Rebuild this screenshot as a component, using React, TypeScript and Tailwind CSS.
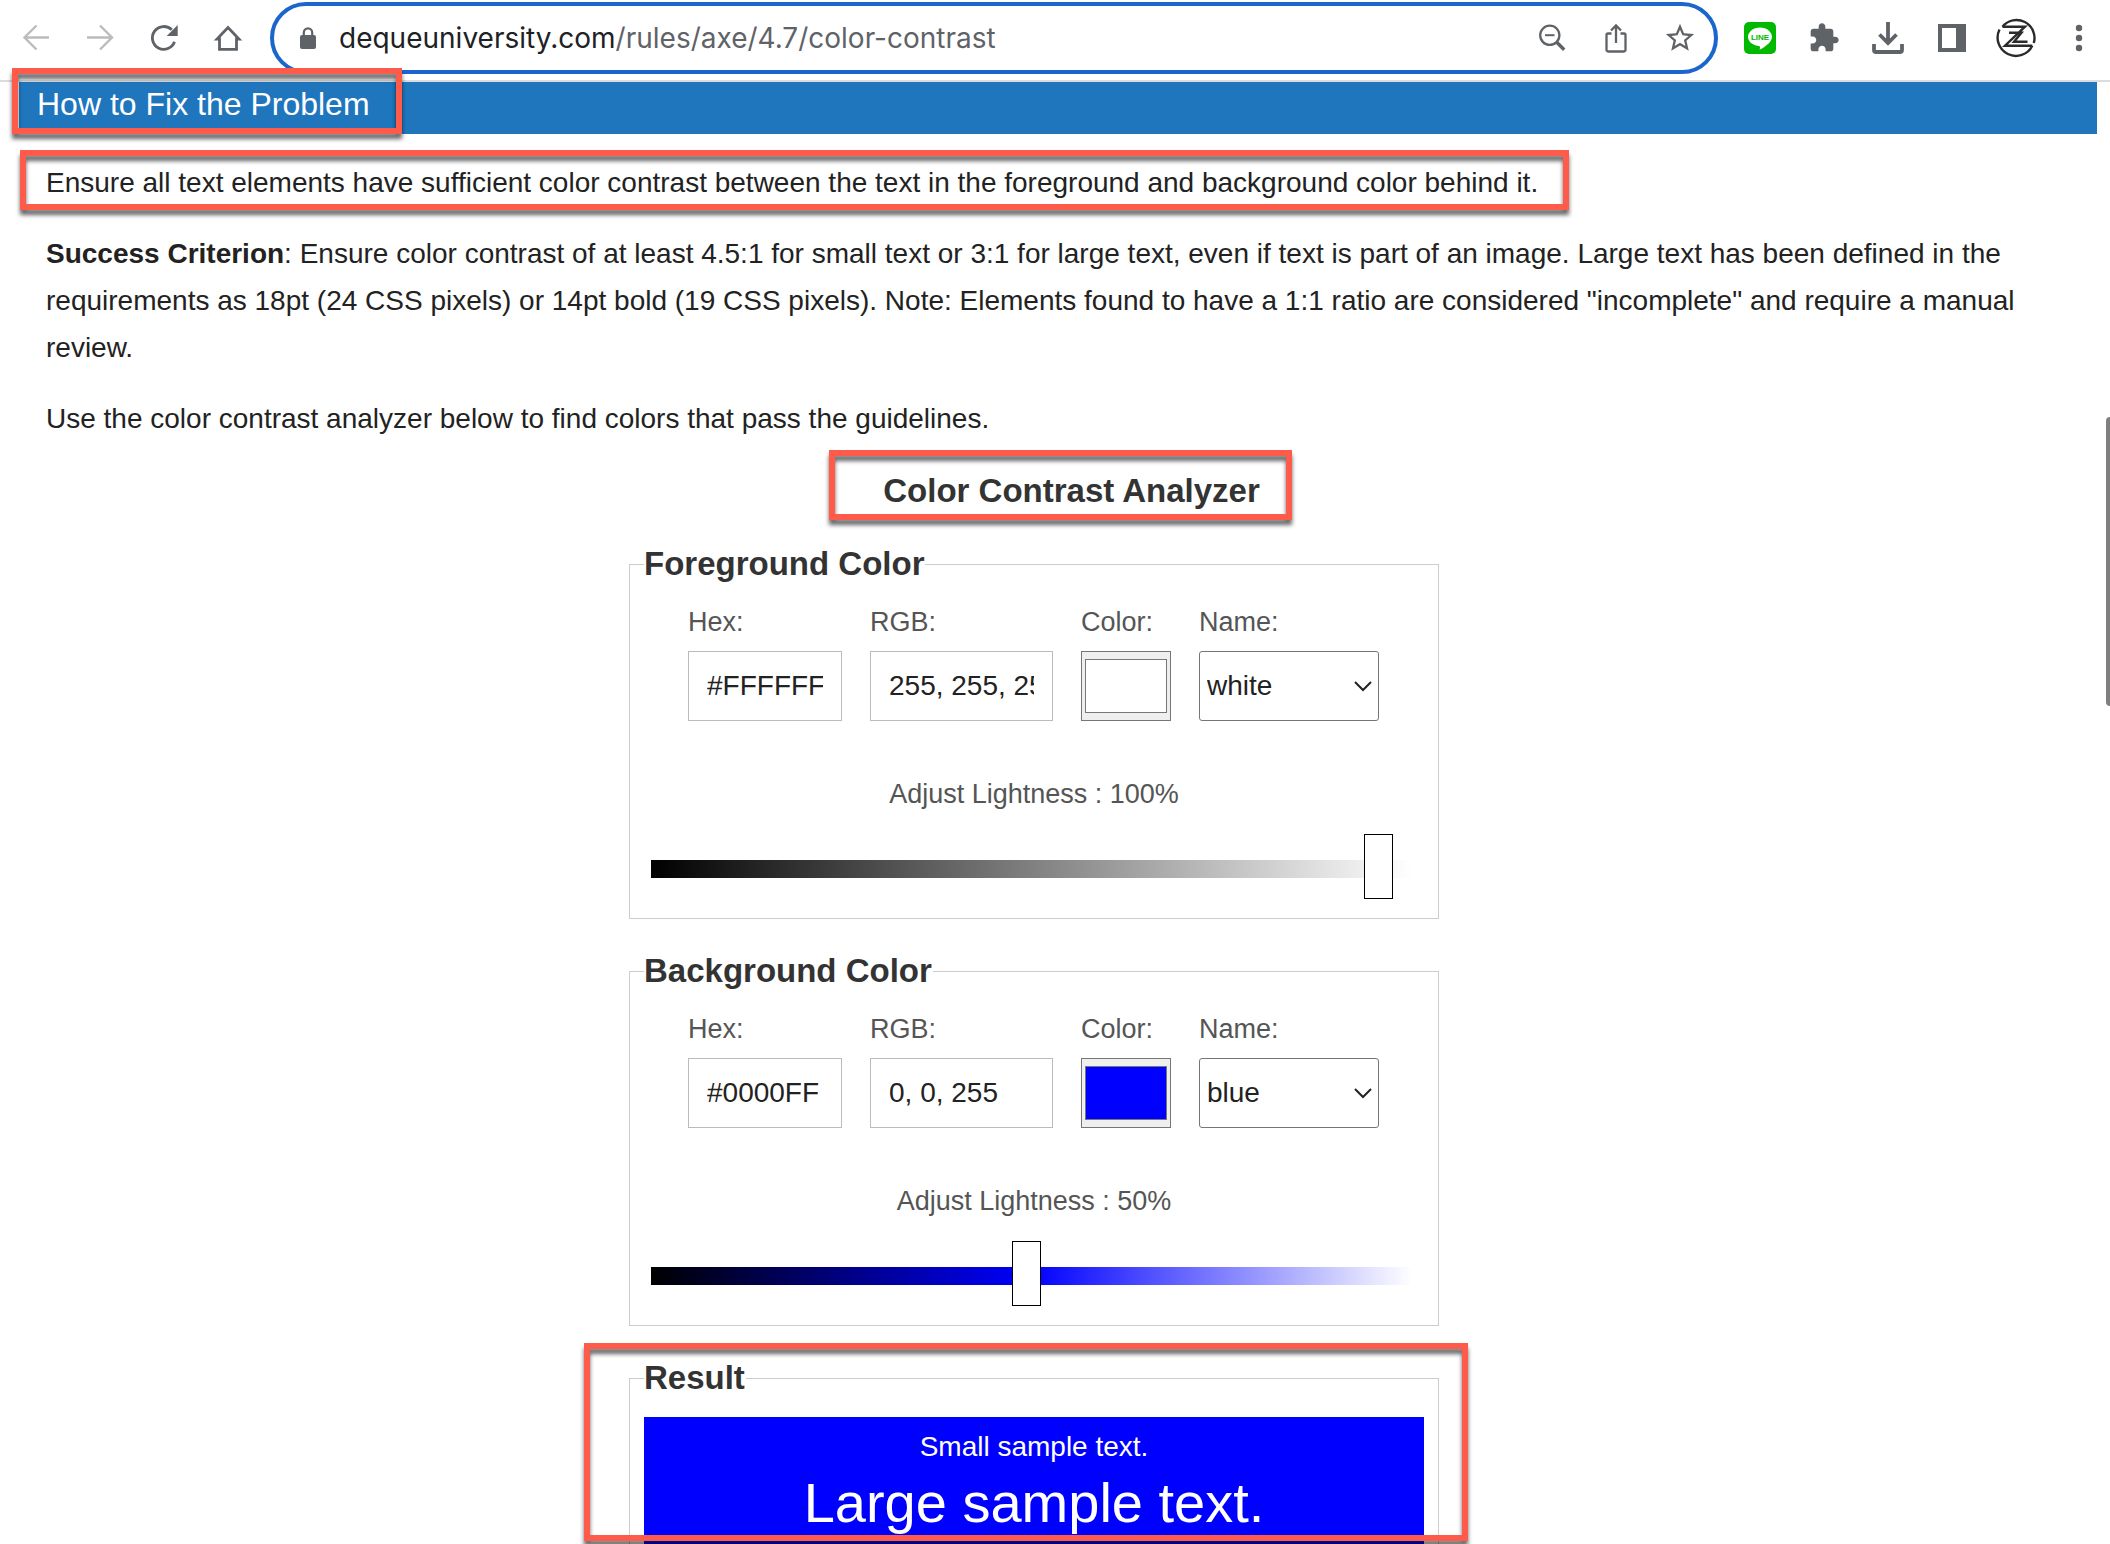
import React, { useId, useState } from "react";

function Stroke({ children }: { children: React.ReactNode }) {
  return (
    <svg viewBox="0 0 32 32" className="size-8" fill="none" stroke="currentColor" aria-hidden="true">
      {children}
    </svg>
  );
}

function ToolButton({
  label,
  children,
  className = "w-16 text-[#5f6368]",
}: {
  label: string;
  children: React.ReactNode;
  className?: string;
}) {
  return (
    <button type="button" aria-label={label} className={`flex h-16 shrink-0 items-center justify-center ${className}`}>
      {children}
    </button>
  );
}

function Toolbar() {
  return (
    <header className="flex h-[82px] shrink-0 items-center border-b-2 border-[#dadce0] bg-white pb-1 pl-1">
      <ToolButton label="Back" className="w-16 text-[#babcbe]">
        <Stroke>
          <path d="M29 15.5H4.5M16.5 3.5 4.5 15.5l12 12" strokeWidth="2.4" />
        </Stroke>
      </ToolButton>
      <ToolButton label="Forward" className="w-16 text-[#babcbe]">
        <Stroke>
          <path d="M3 15.5h24.5M16 3.5l12 12-12 12" strokeWidth="2.4" />
        </Stroke>
      </ToolButton>
      <ToolButton label="Reload">
        <Stroke>
          <path d="M23.8 7.8A11.4 11.4 0 1 0 26.5 19.8" strokeWidth="2.8" />
          <path d="M29.7 3v11h-11z" fill="currentColor" stroke="none" />
        </Stroke>
      </ToolButton>
      <ToolButton label="Home">
        <Stroke>
          <path d="M7.5 17H5L16 5.5 27 17h-2.5v10.3h-17z" strokeWidth="2.8" />
        </Stroke>
      </ToolButton>

      <div className="ml-[10px] flex h-[72px] min-w-0 flex-1 items-center rounded-full border-4 border-[#1a66cc] pl-2 pr-[2px]">
        <ToolButton label="View site information" className="w-[52px] text-[#5f6368]">
          <Stroke>
            <rect x="8" y="13" width="16" height="14" rx="2" fill="currentColor" stroke="none" />
            <path d="M11.8 14v-3.5a4.2 4.2 0 0 1 8.4 0V14" strokeWidth="2.2" />
          </Stroke>
        </ToolButton>
        <div
          role="textbox"
          aria-label="Address"
          contentEditable
          suppressContentEditableWarning
          spellCheck={false}
          className="min-w-0 flex-1 truncate pl-[5px] font-['Inter',sans-serif] text-[28px] leading-9 text-[#5f6368] outline-none"
        >
          <span className="text-[#202124]">dequeuniversity.com</span>/rules/axe/4.7/color-contrast
        </div>
        <ToolButton label="Zoom">
          <Stroke>
            <circle cx="13.8" cy="13.3" r="9.6" strokeWidth="2.3" />
            <path d="M9 13.2h9.5" strokeWidth="2" />
            <path d="m20.5 20 7.7 7.7" strokeWidth="3.4" />
          </Stroke>
        </ToolButton>
        <ToolButton label="Share">
          <Stroke>
            <path
              d="M11.5 11.5H8A1.5 1.5 0 0 0 6.5 13v15A1.5 1.5 0 0 0 8 29.5h16a1.5 1.5 0 0 0 1.5-1.5V13a1.5 1.5 0 0 0-1.5-1.5h-3.5M16 21V4M11 8.5l5-5 5 5"
              strokeWidth="2.3"
            />
          </Stroke>
        </ToolButton>
        <ToolButton label="Bookmark this page">
          <svg viewBox="0 0 24 24" className="size-[34px]" fill="currentColor" aria-hidden="true">
            <path d="M22 9.24l-7.19-.62L12 2 9.19 8.63 2 9.24l5.46 4.73L5.82 21 12 17.27 18.18 21l-1.63-7.03L22 9.24zM12 15.4l-3.76 2.27 1-4.28-3.32-2.88 4.38-.38L12 6.1l1.71 4.04 4.38.38-3.32 2.88 1 4.28L12 15.4z" />
          </svg>
        </ToolButton>
      </div>

      <div className="ml-[10px] flex shrink-0">
        <ToolButton label="LINE">
          <svg viewBox="0 0 32 32" className="size-8" aria-hidden="true">
            <rect width="32" height="32" rx="5" fill="#00b900" />
            <path
              d="M16 5.4c6.6 0 12 4.2 12 9.4 0 2.6-1.4 4.7-3.4 6.6-2.6 2.5-6.6 5.1-9 6.4.4-1.4.6-2.6.1-3.6C9.2 23.7 4 20 4 14.8 4 9.6 9.4 5.4 16 5.4z"
              fill="#fff"
            />
            <text
              x="16"
              y="17.5"
              textAnchor="middle"
              fontSize="8"
              fontWeight="700"
              fontFamily="Liberation Sans, sans-serif"
              fill="#00b900"
            >
              LINE
            </text>
          </svg>
        </ToolButton>
        <ToolButton label="Extensions">
          <svg viewBox="0 0 24 24" className="size-8" fill="currentColor" aria-hidden="true">
            <path d="M20.5 11H19V7c0-1.1-.9-2-2-2h-4V3.5C13 2.12 11.88 1 10.5 1S8 2.12 8 3.5V5H4c-1.1 0-1.99.9-1.99 2v3.8H3.5c1.49 0 2.7 1.21 2.7 2.7s-1.21 2.7-2.7 2.7H2V20c0 1.1.9 2 2 2h3.8v-1.5c0-1.49 1.21-2.7 2.7-2.7 1.49 0 2.7 1.21 2.7 2.7V22H17c1.1 0 2-.9 2-2v-4h1.5c1.38 0 2.5-1.12 2.5-2.5S21.88 11 20.5 11z" />
          </svg>
        </ToolButton>
        <ToolButton label="Downloads">
          <Stroke>
            <path d="M16 0v21M7.5 12.5l8.5 8.5 8.5-8.5" strokeWidth="3.8" />
            <path d="M2 22v6a2 2 0 0 0 2 2h24a2 2 0 0 0 2-2v-6" strokeWidth="3.8" />
          </Stroke>
        </ToolButton>
        <ToolButton label="Side panel">
          <svg viewBox="0 0 32 32" className="size-8" fill="currentColor" fillRule="evenodd" aria-hidden="true">
            <path d="M2 2h28v28H2zM6 6v20h14V6z" />
          </svg>
        </ToolButton>
        <ToolButton label="Profile" className="w-16 text-[#2b2b2b]">
          <svg viewBox="0 0 40 40" className="size-10" fill="none" stroke="currentColor" strokeWidth="2.4" aria-hidden="true">
            <path d="M6.5 8.7A18 18 0 0 1 37.8 25" />
            <path d="M36.3 27.7A18 18 0 0 1 3.5 11.5" />
            <path d="M6.5 8.7H29L9 27.7h27.3M13 14.7h12.5l-7.5 9h13.5" />
          </svg>
        </ToolButton>
        <ToolButton label="Menu" className="w-[62px] text-[#5f6368]">
          <svg viewBox="0 0 32 32" className="size-8" fill="currentColor" aria-hidden="true">
            <circle cx="16" cy="6" r="3.2" />
            <circle cx="16" cy="16" r="3.2" />
            <circle cx="16" cy="26" r="3.2" />
          </svg>
        </ToolButton>
      </div>
    </header>
  );
}

/** Red frame drawn over the part of the page it is placed on. */
function Callout({ className }: { className: string }) {
  return (
    <span
      aria-hidden="true"
      className={`pointer-events-none absolute z-10 border-[6px] border-[#ff5b4b] drop-shadow-[0_5px_2px_rgba(0,0,0,0.6)] ${className}`}
    />
  );
}

const labelClass = "text-[27px] leading-10 text-[#555]";
const fieldClass = "h-[70px] w-full border border-[#bbb] bg-white px-[18px] text-[28px] text-[#222]";

type PickerProps = {
  title: string;
  hex: string;
  rgb: string;
  name: string;
  names: string[];
  lightness: number;
  trackClass: string;
};

function ColorPicker({ title, hex, rgb, name, names, lightness, trackClass }: PickerProps) {
  const id = useId();
  const [level, setLevel] = useState(lightness);
  return (
    <fieldset className="border border-[#ccc] px-[21px] pb-[14px]">
      <legend className="-ml-[7px] pr-px text-[33px] leading-[38px] font-bold text-[#333]">{title}</legend>
      <div className="mt-[19px] flex gap-7 pl-[37px]">
        <div className="flex w-[154px] flex-col gap-[9px]">
          <label htmlFor={`${id}-hex`} className={labelClass}>Hex:</label>
          <input id={`${id}-hex`} type="text" defaultValue={hex} className={fieldClass} />
        </div>
        <div className="flex w-[183px] flex-col gap-[9px]">
          <label htmlFor={`${id}-rgb`} className={labelClass}>RGB:</label>
          <input id={`${id}-rgb`} type="text" defaultValue={rgb} className={fieldClass} />
        </div>
        <div className="flex w-[90px] flex-col gap-[9px]">
          <label htmlFor={`${id}-color`} className={labelClass}>Color:</label>
          <input
            id={`${id}-color`}
            type="color"
            defaultValue={hex.toLowerCase()}
            className="h-[70px] w-full appearance-none border border-[#767676] bg-[#efefef] p-0 [&::-webkit-color-swatch]:rounded-none [&::-webkit-color-swatch]:border [&::-webkit-color-swatch]:border-[#777] [&::-webkit-color-swatch-wrapper]:px-[3px] [&::-webkit-color-swatch-wrapper]:py-[7px]"
          />
        </div>
        <div className="flex w-[180px] flex-col gap-[9px]">
          <label htmlFor={`${id}-name`} className={labelClass}>Name:</label>
          <div className="relative">
            <select
              id={`${id}-name`}
              defaultValue={name}
              className="h-[70px] w-full appearance-none rounded-[3px] border border-[#767676] bg-white px-[7px] text-[28px] text-[#222]"
            >
              {names.map((n) => (
                <option key={n}>{n}</option>
              ))}
            </select>
            <svg
              viewBox="0 0 20 12"
              className="pointer-events-none absolute top-[29px] right-[6px] h-3 w-5"
              fill="none"
              stroke="#222"
              strokeWidth="2"
              aria-hidden="true"
            >
              <path d="m2 2 8 8 8-8" />
            </svg>
          </div>
        </div>
      </div>
      <label htmlFor={`${id}-level`} className="mt-[53px] block text-center text-[27px] leading-10 text-[#555]">
        Adjust Lightness : {level}%
      </label>
      <div className={`mt-5 mr-[5px] h-[70px] bg-[length:100%_18px] bg-[position:0_26px] bg-no-repeat pr-[19px] pl-2 ${trackClass}`}>
        <input
          id={`${id}-level`}
          type="range"
          min={0}
          max={100}
          value={level}
          onChange={(e) => setLevel(Number(e.target.value))}
          className="block h-[65px] w-full appearance-none bg-transparent [&::-webkit-slider-thumb]:h-[65px] [&::-webkit-slider-thumb]:w-[29px] [&::-webkit-slider-thumb]:appearance-none [&::-webkit-slider-thumb]:border [&::-webkit-slider-thumb]:border-black [&::-webkit-slider-thumb]:bg-white"
        />
      </div>
    </fieldset>
  );
}

export default function App() {
  return (
    <div className="relative flex h-screen flex-col overflow-hidden bg-white font-['Liberation_Sans',Arial,sans-serif]">
      <Toolbar />
      <main className="pr-[13px] pl-[19px]">
        <h2 className="h-[52px] bg-[#1f76bd] pl-[18px] text-[32px] leading-[44px] text-white">
          <span className="relative inline-block">
            How to Fix the Problem
            <Callout className="-top-[14px] -right-8 -bottom-2 -left-[25px]" />
          </span>
        </h2>

        <div className="pr-[75px] pl-[27px]">
          <div className="flex flex-col gap-6 pt-[25px] text-[28px] leading-[47px] text-[#222]">
            <p className="relative w-fit">
              Ensure all text elements have sufficient color contrast between the text in the foreground and background color
              behind it.
              <Callout className="-top-[9px] -right-[31px] -bottom-1 -left-[26px]" />
            </p>
            <p>
              <strong>Success Criterion</strong>: Ensure color contrast of at least 4.5:1 for small text or 3:1 for large text,
              even if text is part of an image. Large text has been defined in the requirements as 18pt (24 CSS pixels) or 14pt
              bold (19 CSS pixels). Note: Elements found to have a 1:1 ratio are considered "incomplete" and require a manual
              review.
            </p>
            <p>Use the color contrast analyzer below to find colors that pass the guidelines.</p>
          </div>

          <h3 className="mt-[30px] pl-[75px] text-center text-[33px] leading-[38px] font-bold text-[#333]">
            <span className="relative inline-block">
              Color Contrast Analyzer
              <Callout className="-top-[22px] -right-8 -bottom-[10px] -left-[54px]" />
            </span>
          </h3>

          <form className="mx-auto mt-[35px] flex max-w-[810px] flex-col gap-[33px]">
            <ColorPicker
              title="Foreground Color"
              hex="#FFFFFF"
              rgb="255, 255, 255"
              name="white"
              names={["white", "black", "blue"]}
              lightness={100}
              trackClass="bg-[linear-gradient(to_right,#000,#808080,#fff)]"
            />
            <ColorPicker
              title="Background Color"
              hex="#0000FF"
              rgb="0, 0, 255"
              name="blue"
              names={["white", "black", "blue"]}
              lightness={50}
              trackClass="bg-[linear-gradient(to_right,#000,#00f,#fff)]"
            />
            <div className="relative">
              <fieldset className="border border-[#ccc] px-[14px] pb-[14px]">
                <legend className="pr-px text-[33px] leading-[38px] font-bold text-[#333]">Result</legend>
                <div className="mt-5 bg-[#0000ff] pt-[10px] pb-10 text-center text-white">
                  <p className="text-[28px] leading-10">Small sample text.</p>
                  <p className="mt-1 text-[56px] leading-[64px]">Large sample text.</p>
                </div>
              </fieldset>
              <Callout className="-top-4 -right-[29px] -left-[45px] h-[198px]" />
            </div>
          </form>
        </div>
      </main>
      <div aria-hidden="true" className="absolute top-[417px] right-0 h-[289px] w-1 rounded-l-full bg-[#7f7f7f]" />
    </div>
  );
}
